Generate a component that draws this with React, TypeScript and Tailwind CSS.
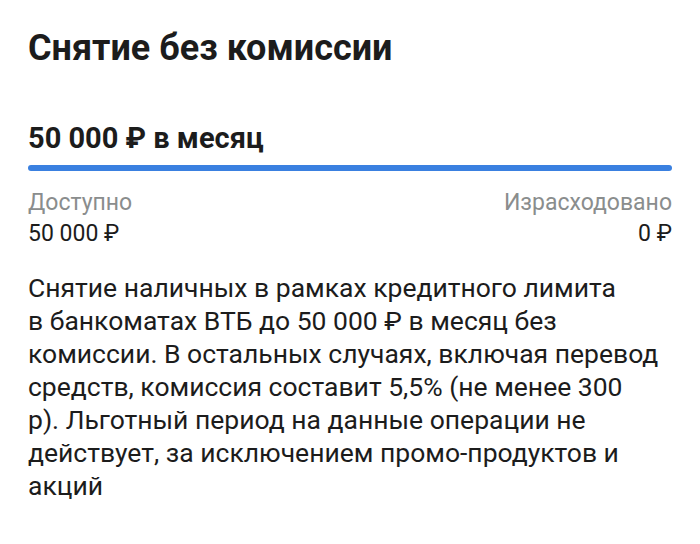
export default function App() {
  return (
    <div
      className="w-[700px] h-[544px] bg-white px-7 pt-[26px] text-[#1c1c1c]"
      style={{ fontFamily: "Roboto, 'Noto Sans', sans-serif" }}
    >
      <h1 className="text-[36px] leading-[44px] font-bold">Снятие без комиссии</h1>
      <div className="mt-[50px] text-[29px] leading-[36px] font-bold">50&nbsp;000&nbsp;₽ в месяц</div>
      <div className="mt-[9px] h-[6px] rounded-full bg-[#3a80e0]" />
      <div className="mt-[16px] flex justify-between text-[23px] leading-[31px]">
        <div className="flex flex-col">
          <span className="text-[#8a8d8d]">Доступно</span>
          <span>50&nbsp;000&nbsp;₽</span>
        </div>
        <div className="flex flex-col items-end">
          <span className="text-[#8a8d8d]">Израсходовано</span>
          <span>0&nbsp;₽</span>
        </div>
      </div>
      <p className="mt-[22px] text-[26.5px] leading-[33px]">
        Снятие наличных в рамках кредитного лимита в&nbsp;банкоматах ВТБ до 50&nbsp;000&nbsp;₽ в месяц без комиссии. В остальных случаях, включая перевод средств, комиссия составит 5,5% (не менее 300
        <br />
        р). Льготный период на данные операции не действует, за исключением промо-продуктов и акций
      </p>
    </div>
  );
}
